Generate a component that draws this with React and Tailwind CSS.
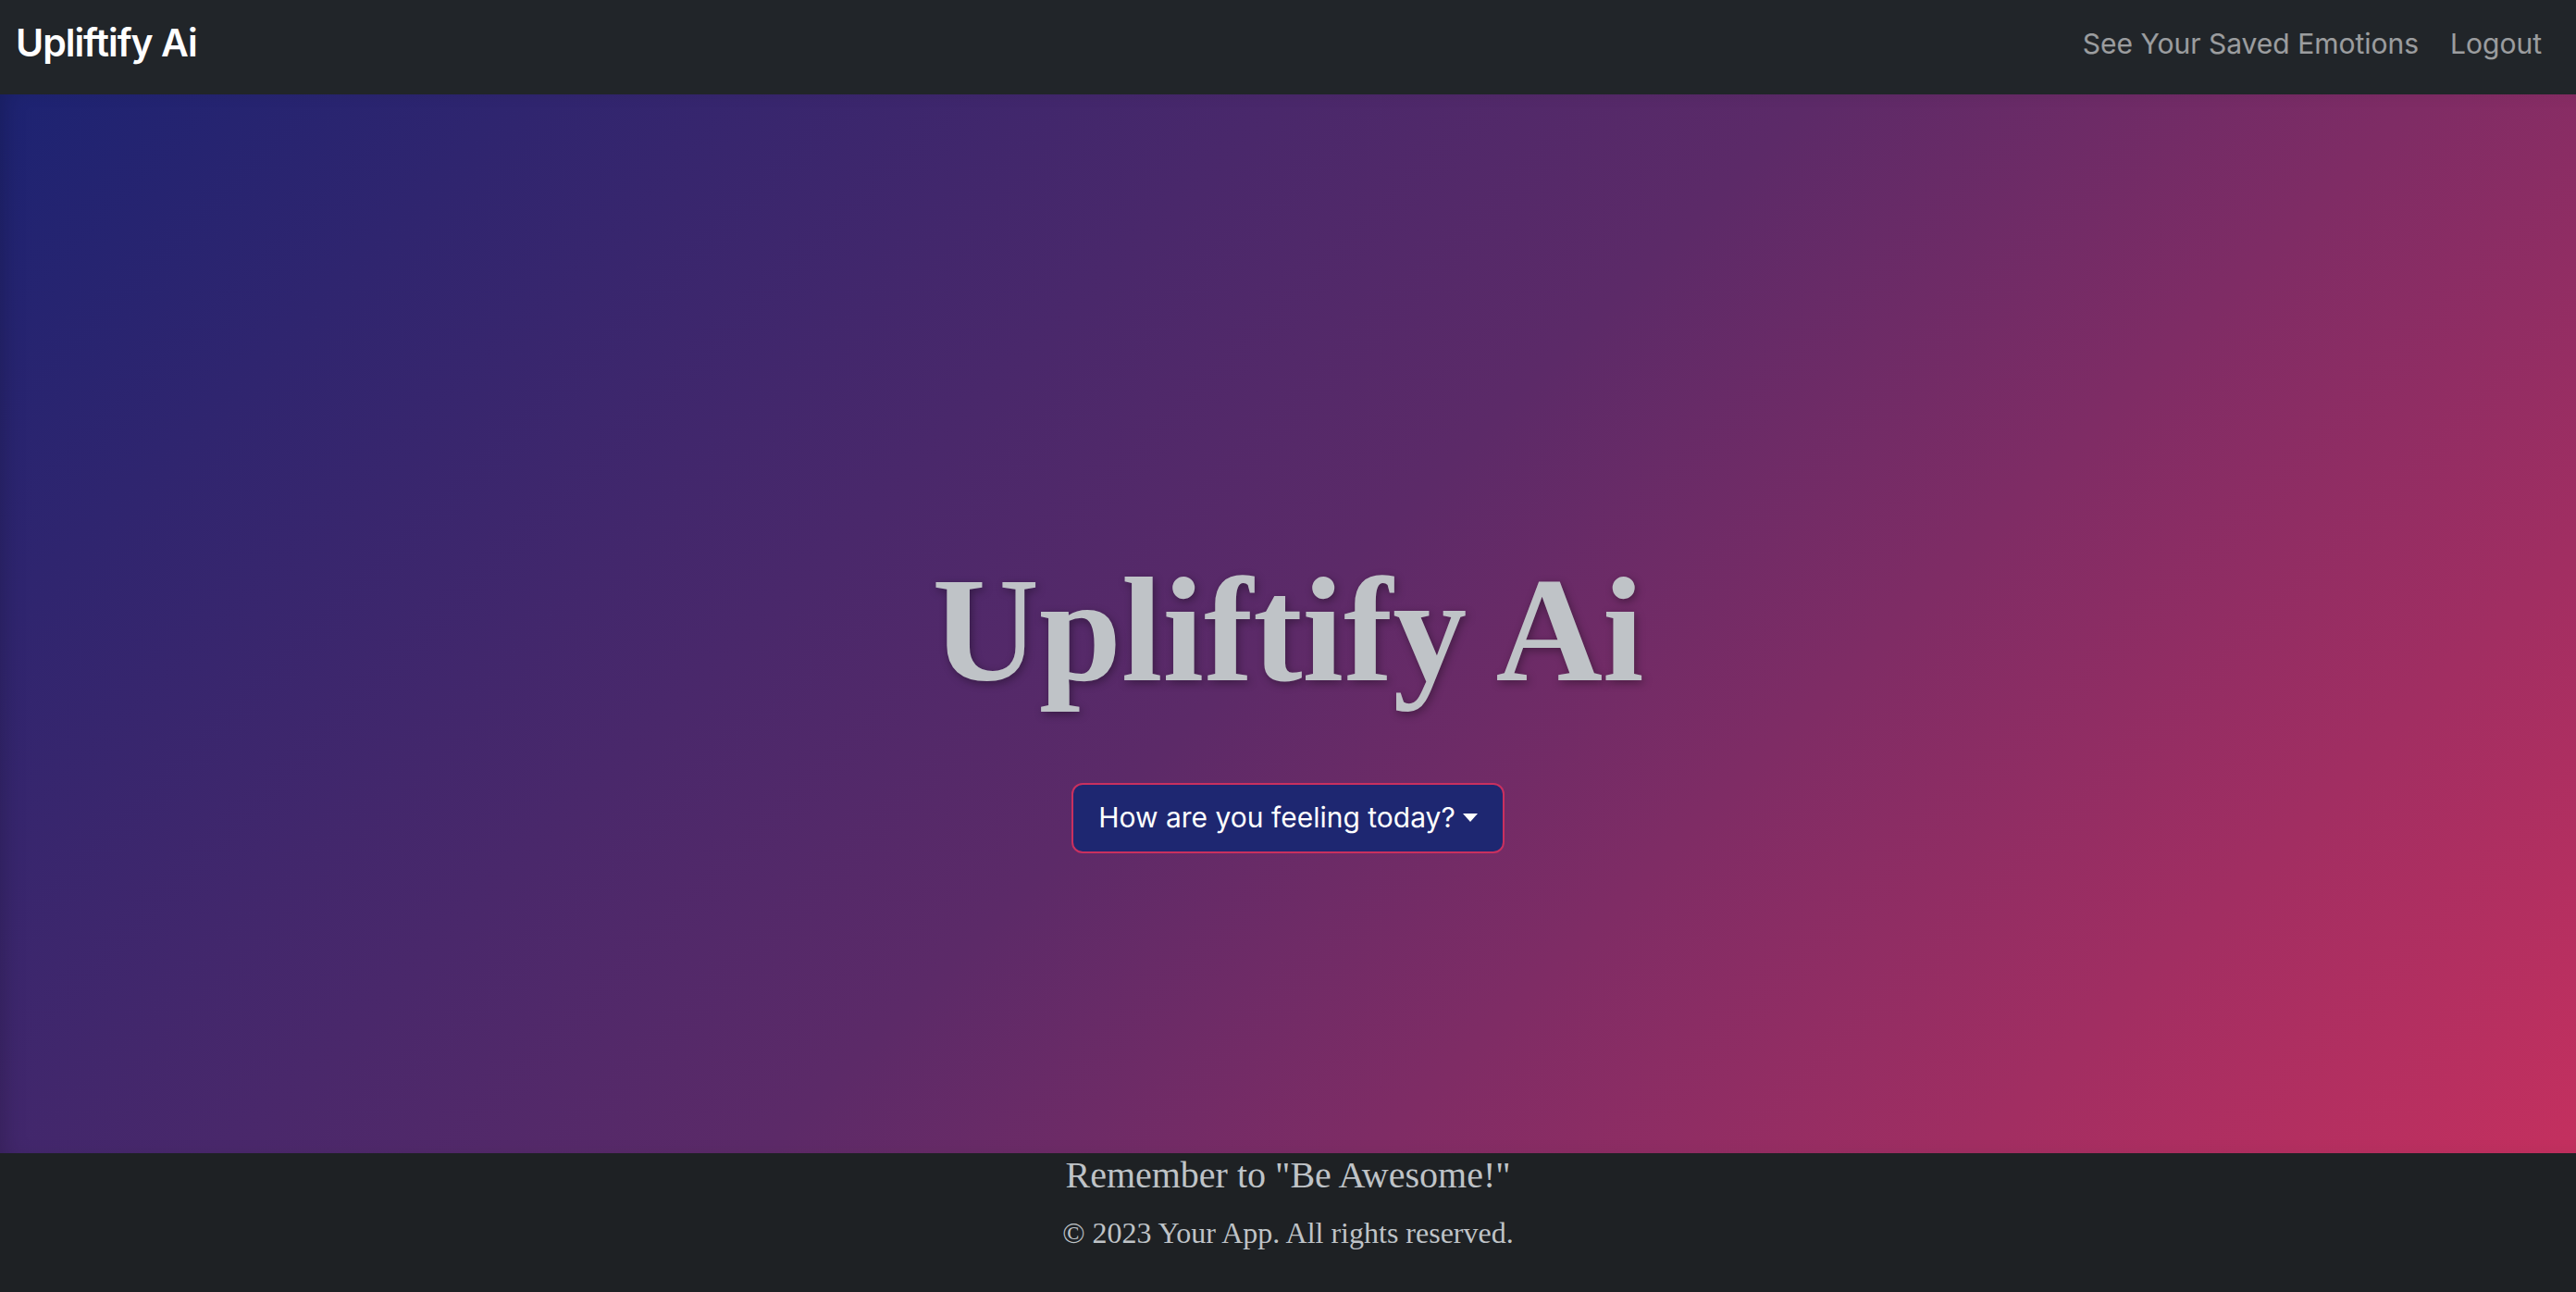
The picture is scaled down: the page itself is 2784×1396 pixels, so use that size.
import { useState } from 'react';

const Navbar = () => (
  <nav className="h-[102px] bg-[#212529] flex items-center justify-between pl-[17px] pr-[37px] pb-[8px]">
    <a href="#" className="text-white text-[41px] font-semibold tracking-tight font-['Inter',sans-serif]">
      Upliftify Ai
    </a>
    <div className="flex items-center gap-[34px] text-[30px] text-white/55 font-['Inter',sans-serif]">
      <a href="#">See Your Saved Emotions</a>
      <a href="#">Logout</a>
    </div>
  </nav>
);

const Footer = () => (
  <footer className="h-[150px] bg-[#1e2124] text-center text-[#bfc3c7] font-['Liberation_Serif',serif]">
    <p className="text-[40px] leading-[1.2]">Remember to "Be Awesome!"</p>
    <p className="text-[32px] leading-[1.2] mt-[19px]">© 2023 Your App. All rights reserved.</p>
  </footer>
);

export default function App() {
  const [open, setOpen] = useState(false);

  return (
    <div className="min-h-screen flex flex-col">
      <Navbar />

      {/* Hero */}
      <main className="h-[1144px] flex flex-col items-center justify-center pt-[158px] bg-[linear-gradient(135deg,#1d2372_0%,#5c2a68_50%,#c4305f_100%)] shadow-[inset_14px_0_24px_-10px_rgba(0,0,0,0.18)]">
        <h1 className="text-[160px] leading-[1.2] font-bold text-[#bfc3c7] font-['Liberation_Serif',serif] [text-shadow:2px_3px_10px_rgba(0,0,0,0.35)]">
          Upliftify Ai
        </h1>
        <button
          onClick={() => setOpen(!open)}
          className="mt-[69px] h-[76px] px-[27px] flex items-center rounded-[12px] border-2 border-[#c9305f] bg-[#1e2771] text-white text-[30px] font-['Inter',sans-serif]"
        >
          How are you feeling today?
          <span className="ml-[8px] w-0 h-0 border-x-[8px] border-x-transparent border-t-[9px] border-t-white" />
        </button>
      </main>

      <Footer />
    </div>
  );
}
